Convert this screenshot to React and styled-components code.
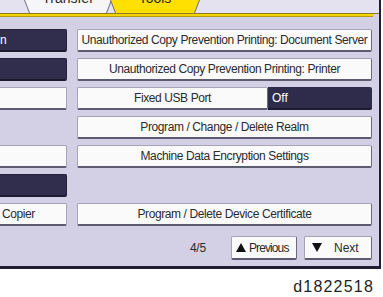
import React from "react";
import styled, { createGlobalStyle } from "styled-components";

const GlobalStyle = createGlobalStyle`
  html, body {
    margin: 0;
    padding: 0;
    background: #ffffff;
  }
  body {
    width: 383px;
    height: 297px;
    overflow: hidden;
    font-family: "Liberation Sans", Arial, sans-serif;
  }
`;

const Screen = styled.div`
  width: 379px;
  height: 266px;
  background: #d3cfe5;
  border-right: 2px solid #1f1d33;
  border-bottom: 3px solid #1f1d33;
  display: flex;
  flex-direction: column;
  overflow: hidden;
`;

const TabStrip = styled.div`
  height: 13px;
  display: flex;
  align-items: stretch;
  background: #e4e2ef;
  padding-left: 24px;
  border-bottom: 1px solid #8a7a20;
`;

const Tab = styled.div`
  width: ${(p) => p.$width}px;
  margin-left: ${(p) => p.$overlap || 0}px;
  background: #6e6c80;
  clip-path: polygon(0 0, 100% 0, calc(100% - 5px) 100%, 5px 100%);
  display: flex;
  padding: 0 1px;
`;

const TabFace = styled.div`
  flex: 1;
  background: ${(p) => (p.$active ? "#ffe000" : "#f6f6f8")};
  clip-path: polygon(0 0, 100% 0, calc(100% - 5px) 100%, 5px 100%);
  display: flex;
  justify-content: center;
  font-size: 14px;
  line-height: 14px;
  color: #2a2a2a;
  overflow: hidden;

  span {
    margin-top: -9px;
  }
`;

const YellowRule = styled.div`
  height: 2px;
  margin-right: 6px;
  background: #f3d400;
  border-bottom: 1px solid #b59d10;
`;

const Body = styled.div`
  display: grid;
  grid-template-columns: 67px 295px;
  grid-auto-rows: 23px;
  column-gap: 10px;
  row-gap: 6px;
  padding-top: 12px;
`;

const Key = styled.div`
  box-sizing: border-box;
  height: 23px;
  display: flex;
  align-items: center;
  justify-content: center;
  background: #fafafb;
  border: 1px solid #a6a3b8;
  border-right-color: #6c6a80;
  border-bottom: 2px solid #5d5b70;
  border-radius: 2px;
  font-size: 12px;
  letter-spacing: -0.4px;
  color: #2b2b2b;
  white-space: nowrap;
  overflow: hidden;
`;

const SideKey = styled(Key)`
  justify-content: flex-start;
  padding-left: ${(p) => p.$pad || 0}px;
  border-left: none;
  border-radius: 0 2px 2px 0;
  background: ${(p) => (p.$dark ? "#302e4c" : "#fafafb")};
  color: ${(p) => (p.$dark ? "#ffffff" : "#2b2b2b")};
  border-color: ${(p) => (p.$dark ? "#24223a" : "#a6a3b8")};
  border-bottom-color: ${(p) => (p.$dark ? "#1c1a2e" : "#5d5b70")};
`;

const Empty = styled.div``;

const SplitRow = styled.div`
  display: grid;
  grid-template-columns: 191px 104px;
`;

const ValueField = styled.div`
  background: #2e2c4a;
  color: #ffffff;
  font-size: 12px;
  display: flex;
  align-items: center;
  padding-left: 4px;
  border-bottom: 2px solid #1c1a2e;
  border-radius: 0 2px 2px 0;
`;

const Footer = styled.div`
  display: flex;
  align-items: center;
  height: 24px;
  margin-top: 10px;
  padding-left: 190px;
`;

const PageCount = styled.div`
  font-size: 12px;
  letter-spacing: -0.3px;
  color: #2b2b2b;
  width: 41px;
`;

const NavKey = styled(Key)`
  height: 24px;
  width: ${(p) => p.$width}px;
  margin-right: ${(p) => p.$gap || 0}px;
  justify-content: flex-start;
  padding-left: ${(p) => p.$pad}px;
  gap: ${(p) => p.$textGap}px;
  letter-spacing: ${(p) => p.$spacing}px;
`;

const Arrow = styled.span`
  width: 0;
  height: 0;
  border-left: 5px solid transparent;
  border-right: 5px solid transparent;
  ${(p) =>
    p.$up
      ? "border-bottom: 9px solid #111;"
      : "border-top: 9px solid #111;"}
`;

const Caption = styled.div`
  font-size: 16px;
  line-height: 18px;
  letter-spacing: 1.2px;
  color: #222;
  text-align: right;
  padding-right: 9px;
  margin-top: 9px;
`;

export default function App() {
  return (
    <>
      <GlobalStyle />
      <Screen>
        <TabStrip>
          <Tab $width={86}>
            <TabFace>
              <span>Transfer</span>
            </TabFace>
          </Tab>
          <Tab $width={88} $overlap={-2}>
            <TabFace $active>
              <span>Tools</span>
            </TabFace>
          </Tab>
        </TabStrip>
        <YellowRule />
        <Body>
          <SideKey $dark>n</SideKey>
          <Key>Unauthorized Copy Prevention Printing: Document Server</Key>

          <SideKey $dark />
          <Key>Unauthorized Copy Prevention Printing: Printer</Key>

          <SideKey />
          <SplitRow>
            <Key>Fixed USB Port</Key>
            <ValueField>Off</ValueField>
          </SplitRow>

          <Empty />
          <Key>Program / Change / Delete Realm</Key>

          <SideKey />
          <Key>Machine Data Encryption Settings</Key>

          <SideKey $dark />
          <Empty />

          <SideKey $pad={2}>Copier</SideKey>
          <Key>Program / Delete Device Certificate</Key>
        </Body>
        <Footer>
          <PageCount>4/5</PageCount>
          <NavKey $width={66} $gap={7} $pad={4} $textGap={3} $spacing={-0.9}>
            <Arrow $up />
            Previous
          </NavKey>
          <NavKey $width={68} $pad={7} $textGap={12} $spacing={0}>
            <Arrow />
            Next
          </NavKey>
        </Footer>
      </Screen>
      <Caption>d1822518</Caption>
    </>
  );
}
